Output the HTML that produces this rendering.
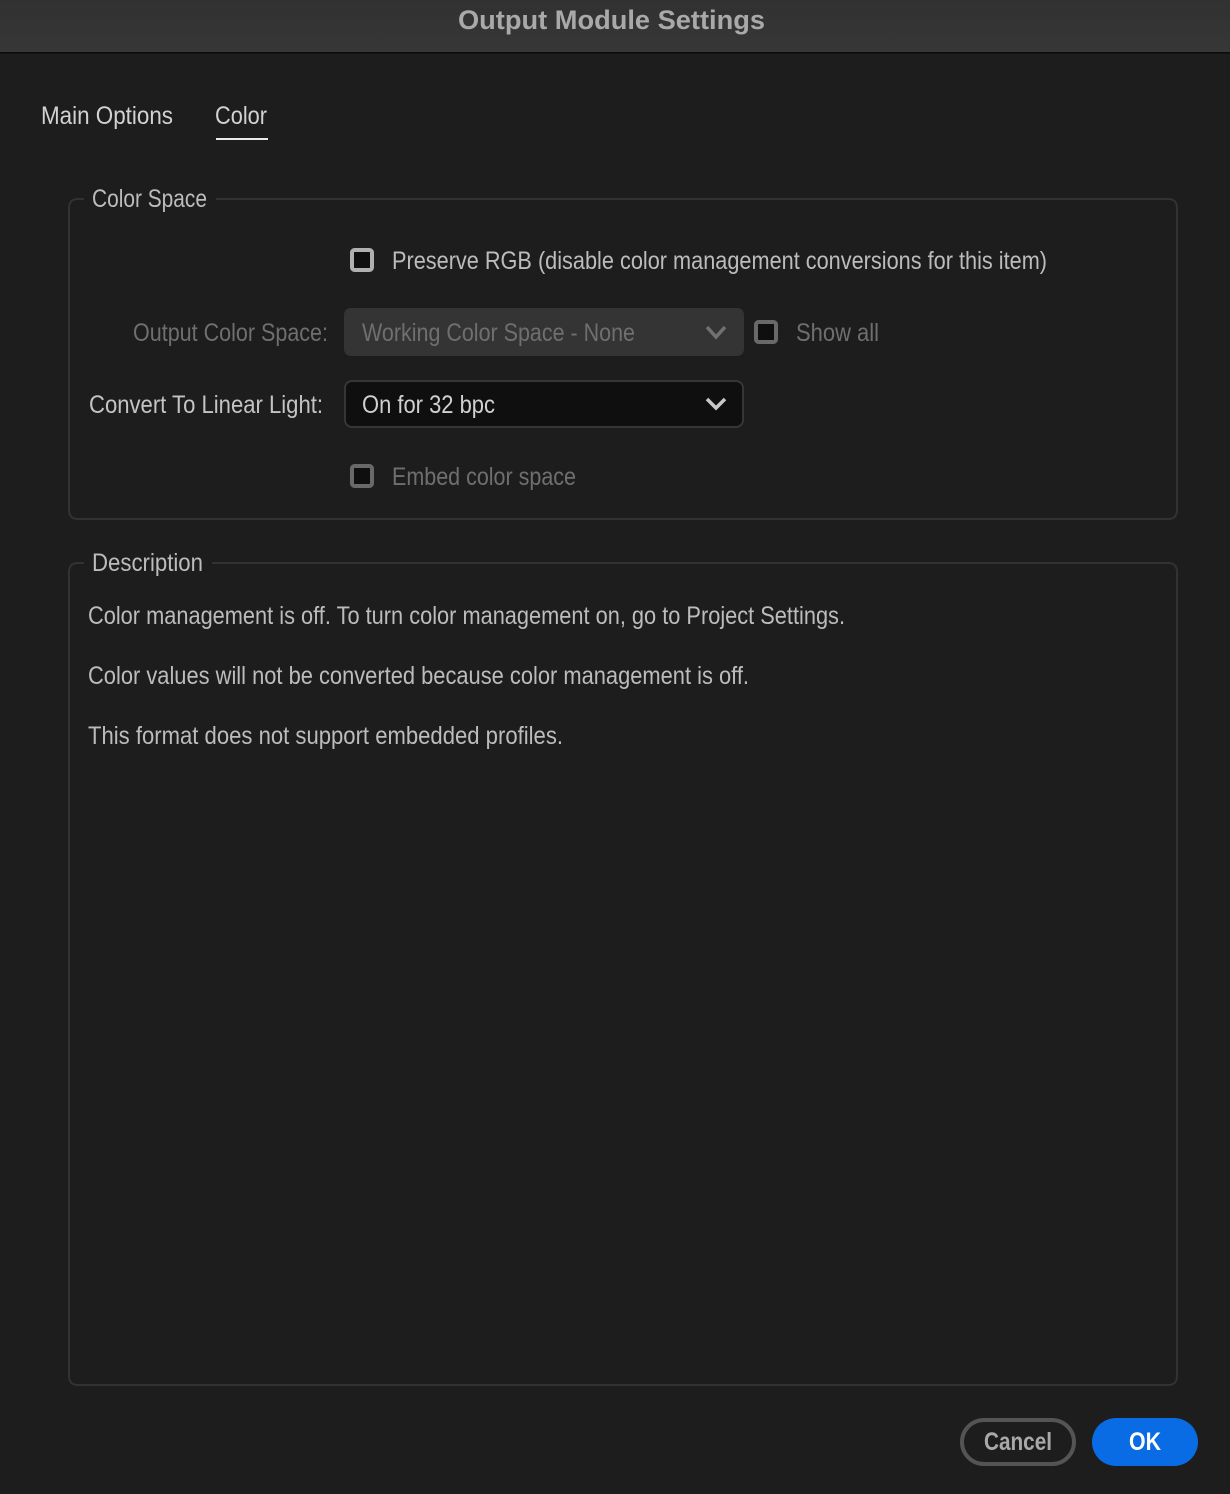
<!DOCTYPE html>
<html><head><meta charset="utf-8"><style>
html,body{margin:0;padding:0;background:#1d1d1d;width:1230px;height:1494px;overflow:hidden}
svg{display:block}
text{font-family:"Liberation Sans",sans-serif;font-size:25px;fill:#bcbcbc}
</style></head><body>
<svg width="1230" height="1494" viewBox="0 0 1230 1494" xmlns="http://www.w3.org/2000/svg">
<defs><linearGradient id="t" x1="0" y1="0" x2="0" y2="1"><stop offset="0" stop-color="#313131"/><stop offset="1" stop-color="#373737"/></linearGradient></defs>
<rect width="1230" height="1494" fill="#1d1d1d"/>
<rect width="1230" height="52" fill="url(#t)"/>
<rect y="52" width="1230" height="1.5" fill="#0b0b0b"/>
<text x="458" y="29" textLength="307" lengthAdjust="spacingAndGlyphs" style="font-size:27px;font-weight:bold;fill:#a9a9a9">Output Module Settings</text>

<text x="41" y="124" textLength="132" lengthAdjust="spacingAndGlyphs" style="fill:#d2d2d2">Main Options</text>
<text x="215" y="124" textLength="52" lengthAdjust="spacingAndGlyphs" style="fill:#d2d2d2">Color</text>
<rect x="216" y="138" width="52" height="2" fill="#e8e8e8"/>

<path d="M84 199H78Q69 199 69 208V510Q69 519 78 519H1168Q1177 519 1177 510V208Q1177 199 1168 199H216" fill="none" stroke="#323232" stroke-width="2"/>
<text x="92" y="207" textLength="115" lengthAdjust="spacingAndGlyphs">Color Space</text>

<rect x="352" y="250" width="20" height="20" rx="2.5" fill="#0f0f0f" stroke="#b0b0b0" stroke-width="4"/>
<text x="392" y="269" textLength="655" lengthAdjust="spacingAndGlyphs">Preserve RGB (disable color management conversions for this item)</text>

<text x="133" y="341" textLength="195" lengthAdjust="spacingAndGlyphs" style="fill:#6f6f6f">Output Color Space:</text>
<rect x="344" y="308" width="400" height="48" rx="7" fill="#343434"/>
<text x="362" y="341" textLength="273" lengthAdjust="spacingAndGlyphs" style="fill:#6f6f6f">Working Color Space - None</text>
<path d="M707 327L716 337L725 327" fill="none" stroke="#717171" stroke-width="3.5"/>
<rect x="756" y="322" width="20" height="20" rx="2.5" fill="#0f0f0f" stroke="#696969" stroke-width="4"/>
<text x="796" y="341" textLength="83" lengthAdjust="spacingAndGlyphs" style="fill:#6f6f6f">Show all</text>

<text x="89" y="413" textLength="234" lengthAdjust="spacingAndGlyphs" style="fill:#c4c4c4">Convert To Linear Light:</text>
<rect x="345" y="381" width="398" height="46" rx="7" fill="#0f0f0f" stroke="#363636" stroke-width="2"/>
<text x="362" y="413" textLength="133" lengthAdjust="spacingAndGlyphs" style="fill:#d0d0d0">On for 32 bpc</text>
<path d="M707 399L716 408L725 399" fill="none" stroke="#c8c8c8" stroke-width="3.5"/>

<rect x="352" y="466" width="20" height="20" rx="2.5" fill="#0f0f0f" stroke="#696969" stroke-width="4"/>
<text x="392" y="485" textLength="184" lengthAdjust="spacingAndGlyphs" style="fill:#6f6f6f">Embed color space</text>

<path d="M84 563H78Q69 563 69 572V1376Q69 1385 78 1385H1168Q1177 1385 1177 1376V572Q1177 563 1168 563H212" fill="none" stroke="#323232" stroke-width="2"/>
<text x="92" y="571" textLength="111" lengthAdjust="spacingAndGlyphs">Description</text>
<text x="88" y="624" textLength="757" lengthAdjust="spacingAndGlyphs">Color management is off. To turn color management on, go to Project Settings.</text>
<text x="88" y="684" textLength="661" lengthAdjust="spacingAndGlyphs">Color values will not be converted because color management is off.</text>
<text x="88" y="744" textLength="475" lengthAdjust="spacingAndGlyphs">This format does not support embedded profiles.</text>

<rect x="962" y="1420" width="112" height="44" rx="22" fill="#1d1d1d" stroke="#545454" stroke-width="4"/>
<text x="984" y="1450" textLength="68" lengthAdjust="spacingAndGlyphs" style="font-weight:bold;fill:#a9a9a9">Cancel</text>
<rect x="1092" y="1418" width="106" height="48" rx="24" fill="#0a6ce4"/>
<text x="1129" y="1450" textLength="32" lengthAdjust="spacingAndGlyphs" style="font-weight:bold;fill:#fff">OK</text>
</svg>
</body></html>
